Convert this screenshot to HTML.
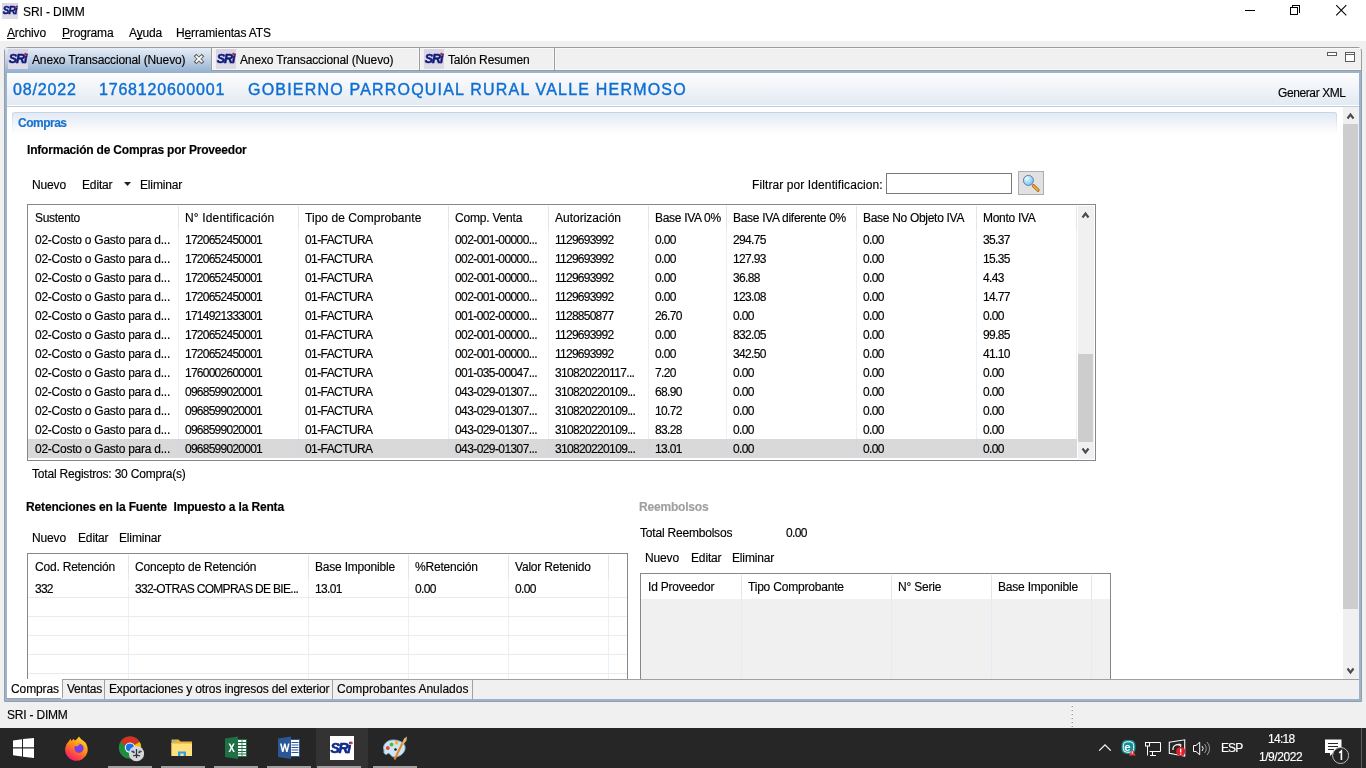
<!DOCTYPE html><html><head><meta charset="utf-8"><style>
*{margin:0;padding:0;box-sizing:border-box}
html,body{width:1366px;height:768px;overflow:hidden;background:#f0f0f0;font-family:"Liberation Sans",sans-serif;font-size:12px;color:#000}
.a{position:absolute}
.t{position:absolute;white-space:nowrap;line-height:0;height:0;will-change:transform;-webkit-text-stroke:0.15px currentColor}
.t>span,.t{ }
.sri{position:absolute;will-change:transform}
svg.a{will-change:transform}
.b{font-weight:bold}
u{text-decoration-skip-ink:none}
</style></head><body>
<div class="a" style="left:0;top:0;width:1366px;height:41px;background:#fff"></div>
<div class="sri" style="left:2px;top:3px;width:16px;height:16px"><svg width="16" height="16" viewBox="0 0 20 20"><rect width="20" height="20" fill="#d8d6e6"/><rect y="15" width="20" height="5" fill="#dcdbe6"/><text x="0.8" y="14.2" font-family="Liberation Sans" font-weight="bold" font-style="italic" font-size="12.5" fill="#0f1a78" stroke="#0f1a78" stroke-width="0.5" letter-spacing="-1.1">SRi</text><circle cx="17.5" cy="5" r="1.3" fill="#e8202a"/></svg></div>
<div class="t" style="left:23px;top:12px;letter-spacing:-0.1px">SRI - DIMM</div>
<div class="a" style="left:1245px;top:10px;width:10px;height:1px;background:#000"></div>
<div class="a" style="left:1290px;top:7px;width:8px;height:8px;border:1px solid #000"></div>
<div class="a" style="left:1292px;top:5px;width:8px;height:1px;background:#000"></div>
<div class="a" style="left:1299px;top:5px;width:1px;height:8px;background:#000"></div>
<div class="a" style="left:1292px;top:5px;width:1px;height:2px;background:#000"></div>
<svg class="a" style="left:1335px;top:4px" width="13" height="13"><path d="M1.2 1.2L11.3 11.3M11.3 1.2L1.2 11.3" stroke="#000" stroke-width="1.05"/></svg>
<div class="t" style="left:7px;top:33px;letter-spacing:-0.15px"><u>A</u>rchivo</div>
<div class="t" style="left:62px;top:33px;letter-spacing:-0.15px"><u>P</u>rograma</div>
<div class="t" style="left:129px;top:33px;letter-spacing:-0.15px">A<u>y</u>uda</div>
<div class="t" style="left:176px;top:33px;letter-spacing:-0.15px">H<u>e</u>rramientas ATS</div>
<div class="a" style="left:4px;top:47px;width:1358px;height:655px;border:1px solid #9c9c9c;border-radius:4px 4px 0 0;background:#f0f0f0"></div>
<div class="a" style="left:5px;top:48px;width:1356px;height:1px;background:#f8f8f8"></div>
<div class="a" style="left:5px;top:71px;width:1356px;height:630px;border:2px solid #98b4d4;border-top-width:2px"></div>
<div class="a" style="left:211px;top:70px;width:1150px;height:1px;background:#9c9c9c"></div>
<div class="a" style="left:212px;top:69px;width:1149px;height:1px;background:#f8f8f8"></div>
<div class="a" style="left:5px;top:48px;width:206px;height:25px;background:linear-gradient(#e6eef8,#c3d3e6 45%,#93afcf)"></div>
<div class="sri" style="left:8px;top:49px;width:20px;height:20px"><svg width="20" height="20" viewBox="0 0 20 20"><rect width="20" height="20" fill="#d8d6e6"/><rect y="15" width="20" height="5" fill="#dcdbe6"/><text x="0.8" y="14.2" font-family="Liberation Sans" font-weight="bold" font-style="italic" font-size="12.5" fill="#0f1a78" stroke="#0f1a78" stroke-width="0.5" letter-spacing="-1.1">SRi</text><circle cx="17.5" cy="5" r="1.3" fill="#e8202a"/></svg></div>
<div class="t" style="left:32px;top:60px;letter-spacing:-0.15px">Anexo Transaccional (Nuevo)</div>
<svg class="a" style="left:192px;top:52px" width="14" height="14"><path d="M3 3L11 11M11 3L3 11" stroke="#606060" stroke-width="3.8" stroke-linecap="butt"/><path d="M3.8 3.8L10.2 10.2M10.2 3.8L3.8 10.2" stroke="#fff" stroke-width="1.9" stroke-linecap="butt"/></svg>
<div class="a" style="left:211px;top:48px;width:1px;height:22px;background:#9c9c9c"></div>
<div class="a" style="left:212px;top:49px;width:1px;height:20px;background:#f8f8f8"></div>
<div class="a" style="left:419px;top:48px;width:1px;height:22px;background:#9c9c9c"></div>
<div class="a" style="left:420px;top:49px;width:1px;height:20px;background:#f8f8f8"></div>
<div class="a" style="left:418px;top:49px;width:1px;height:20px;background:#f8f8f8"></div>
<div class="a" style="left:554px;top:48px;width:1px;height:22px;background:#9c9c9c"></div>
<div class="a" style="left:555px;top:49px;width:1px;height:20px;background:#f8f8f8"></div>
<div class="a" style="left:553px;top:49px;width:1px;height:20px;background:#f8f8f8"></div>
<div class="sri" style="left:216px;top:49px;width:20px;height:20px"><svg width="20" height="20" viewBox="0 0 20 20"><rect width="20" height="20" fill="#d8d6e6"/><rect y="15" width="20" height="5" fill="#dcdbe6"/><text x="0.8" y="14.2" font-family="Liberation Sans" font-weight="bold" font-style="italic" font-size="12.5" fill="#0f1a78" stroke="#0f1a78" stroke-width="0.5" letter-spacing="-1.1">SRi</text><circle cx="17.5" cy="5" r="1.3" fill="#e8202a"/></svg></div>
<div class="t" style="left:240px;top:60px;letter-spacing:-0.15px">Anexo Transaccional (Nuevo)</div>
<div class="sri" style="left:424px;top:49px;width:20px;height:20px"><svg width="20" height="20" viewBox="0 0 20 20"><rect width="20" height="20" fill="#d8d6e6"/><rect y="15" width="20" height="5" fill="#dcdbe6"/><text x="0.8" y="14.2" font-family="Liberation Sans" font-weight="bold" font-style="italic" font-size="12.5" fill="#0f1a78" stroke="#0f1a78" stroke-width="0.5" letter-spacing="-1.1">SRi</text><circle cx="17.5" cy="5" r="1.3" fill="#e8202a"/></svg></div>
<div class="t" style="left:448px;top:60px;letter-spacing:-0.15px">Talón Resumen</div>
<div class="a" style="left:1327px;top:52px;width:10px;height:4px;border:1px solid #5c5c5c;background:#fff"></div>
<div class="a" style="left:1345px;top:52px;width:10px;height:10px;border:1px solid #5c5c5c;background:#fff"></div>
<div class="a" style="left:1346px;top:54px;width:8px;height:1px;background:#5c5c5c"></div>
<div class="a" style="left:7px;top:73px;width:1352px;height:33px;background:linear-gradient(#fdfdfe,#e3eaf3 96%,#ffffff 96%)"></div>
<div class="a" style="left:7px;top:106px;width:1352px;height:1px;background:#b9cde3"></div>
<div class="t" style="left:13px;top:90px;font-size:16px;color:#0e6fd2;letter-spacing:0.85px;-webkit-text-stroke:0.4px #0e6fd2">08/2022</div>
<div class="t" style="left:99px;top:90px;font-size:16px;color:#0e6fd2;letter-spacing:0.8px;-webkit-text-stroke:0.4px #0e6fd2">1768120600001</div>
<div class="t" style="left:248px;top:90px;font-size:16px;color:#0e6fd2;letter-spacing:1.2px;-webkit-text-stroke:0.4px #0e6fd2">GOBIERNO PARROQUIAL RURAL VALLE HERMOSO</div>
<div class="t" style="left:1278px;top:93px;letter-spacing:-0.4px">Generar XML</div>
<div class="a" style="left:7px;top:107px;width:1352px;height:572px;background:#fff"></div>
<div class="a" style="left:1343px;top:107px;width:16px;height:572px;background:#f0f0f0"></div>
<div class="a" style="left:1343px;top:124px;width:15px;height:485px;background:#cdcdcd"></div>
<svg class="a" style="left:1345.5px;top:111.5px" width="9" height="8"><path d="M1 6L4 2L7 6" transform="translate(0.5 0.5)" fill="none" stroke="#4a4a4a" stroke-width="2.1" stroke-linejoin="miter"/></svg>
<svg class="a" style="left:1345.5px;top:666.5px" width="9" height="8"><path d="M1 1L4 5L7 1" transform="translate(0.5 0.5)" fill="none" stroke="#4a4a4a" stroke-width="2.1" stroke-linejoin="miter"/></svg>
<div class="a" style="left:12px;top:112px;width:1325px;height:22px;border-radius:3px 3px 0 0;background:linear-gradient(#c3d5e9,rgba(195,213,233,0))"></div>
<div class="a" style="left:13px;top:113px;width:1323px;height:21px;border-radius:2px 2px 0 0;background:linear-gradient(#e3eaf4,#f6f8fb 70%,#ffffff)"></div>
<div class="t" style="left:18px;top:123px;font-weight:bold;color:#1872d0;letter-spacing:-0.5px">Compras</div>
<div class="t" style="left:27px;top:150px;font-weight:bold;letter-spacing:-0.2px">Información de Compras por Proveedor</div>
<div class="t" style="left:32px;top:185px;letter-spacing:-0.15px">Nuevo</div>
<div class="t" style="left:82px;top:185px;letter-spacing:-0.15px">Editar</div>
<svg class="a" style="left:124px;top:182px" width="8" height="5"><path d="M0 0h7L3.5 4z" fill="#222"/></svg>
<div class="t" style="left:140px;top:185px;letter-spacing:-0.15px">Eliminar</div>
<div class="t" style="left:752px;top:185px;letter-spacing:0.1px">Filtrar por Identificacion:</div>
<div class="a" style="left:886px;top:173px;width:126px;height:21px;border:1px solid #7a7a7a;background:#fff"></div>
<div class="a" style="left:1018px;top:171px;width:26px;height:24px;border:1px solid #adadad;background:#e1e1e1"></div>
<svg class="a" style="left:1021px;top:174px" width="20" height="20"><defs><radialGradient id="lens" cx="0.35" cy="0.3" r="0.8"><stop offset="0" stop-color="#f2fcff"/><stop offset="0.35" stop-color="#b5e6fb"/><stop offset="1" stop-color="#6fc4ef"/></radialGradient></defs><path d="M12.4 11.6L17 16.2" stroke="#9a5a10" stroke-width="3.2" stroke-linecap="round"/><path d="M12.4 11.6L16.8 16" stroke="#f2b13a" stroke-width="1.8" stroke-linecap="round"/><circle cx="7.4" cy="6.4" r="5" fill="url(#lens)" stroke="#5b6ea3" stroke-width="0.9"/></svg>
<div class="a" style="left:27px;top:204px;width:1069px;height:257px;border:1px solid #828790;background:#fff"></div>
<div class="a" style="left:28px;top:439px;width:1049px;height:19px;background:#d9d9d9"></div>
<div class="a" style="left:1078px;top:206px;width:16px;height:253px;background:#f0f0f0"></div>
<div class="a" style="left:1078px;top:354px;width:15px;height:88px;background:#cdcdcd"></div>
<svg class="a" style="left:1080.5px;top:210.5px" width="9" height="8"><path d="M1 6L4 2L7 6" transform="translate(0.5 0.5)" fill="none" stroke="#4a4a4a" stroke-width="2.1" stroke-linejoin="miter"/></svg>
<svg class="a" style="left:1080.5px;top:446.5px" width="9" height="8"><path d="M1 1L4 5L7 1" transform="translate(0.5 0.5)" fill="none" stroke="#4a4a4a" stroke-width="2.1" stroke-linejoin="miter"/></svg>
<div class="a" style="left:178px;top:206px;width:1px;height:24px;background:#e5e5e5"></div>
<div class="a" style="left:178px;top:230px;width:1px;height:209px;background:#e8f0fa"></div>
<div class="a" style="left:178px;top:439px;width:1px;height:19px;background:#cfd8e3"></div>
<div class="a" style="left:298px;top:206px;width:1px;height:24px;background:#e5e5e5"></div>
<div class="a" style="left:298px;top:230px;width:1px;height:209px;background:#e8f0fa"></div>
<div class="a" style="left:298px;top:439px;width:1px;height:19px;background:#cfd8e3"></div>
<div class="a" style="left:448px;top:206px;width:1px;height:24px;background:#e5e5e5"></div>
<div class="a" style="left:448px;top:230px;width:1px;height:209px;background:#e8f0fa"></div>
<div class="a" style="left:448px;top:439px;width:1px;height:19px;background:#cfd8e3"></div>
<div class="a" style="left:548px;top:206px;width:1px;height:24px;background:#e5e5e5"></div>
<div class="a" style="left:548px;top:230px;width:1px;height:209px;background:#e8f0fa"></div>
<div class="a" style="left:548px;top:439px;width:1px;height:19px;background:#cfd8e3"></div>
<div class="a" style="left:648px;top:206px;width:1px;height:24px;background:#e5e5e5"></div>
<div class="a" style="left:648px;top:230px;width:1px;height:209px;background:#e8f0fa"></div>
<div class="a" style="left:648px;top:439px;width:1px;height:19px;background:#cfd8e3"></div>
<div class="a" style="left:726px;top:206px;width:1px;height:24px;background:#e5e5e5"></div>
<div class="a" style="left:726px;top:230px;width:1px;height:209px;background:#e8f0fa"></div>
<div class="a" style="left:726px;top:439px;width:1px;height:19px;background:#cfd8e3"></div>
<div class="a" style="left:856px;top:206px;width:1px;height:24px;background:#e5e5e5"></div>
<div class="a" style="left:856px;top:230px;width:1px;height:209px;background:#e8f0fa"></div>
<div class="a" style="left:856px;top:439px;width:1px;height:19px;background:#cfd8e3"></div>
<div class="a" style="left:976px;top:206px;width:1px;height:24px;background:#e5e5e5"></div>
<div class="a" style="left:976px;top:230px;width:1px;height:209px;background:#e8f0fa"></div>
<div class="a" style="left:976px;top:439px;width:1px;height:19px;background:#cfd8e3"></div>
<div class="a" style="left:1076px;top:206px;width:1px;height:24px;background:#e5e5e5"></div>
<div class="a" style="left:1076px;top:230px;width:1px;height:209px;background:#e8f0fa"></div>
<div class="a" style="left:1076px;top:439px;width:1px;height:19px;background:#cfd8e3"></div>
<div class="t" style="left:35px;top:218px;letter-spacing:-0.3px">Sustento</div>
<div class="t" style="left:185px;top:218px;letter-spacing:0.15px">N° Identificación</div>
<div class="t" style="left:305px;top:218px;letter-spacing:0.04px">Tipo de Comprobante</div>
<div class="t" style="left:455px;top:218px;letter-spacing:-0.2px">Comp. Venta</div>
<div class="t" style="left:555px;top:218px;letter-spacing:0.0px">Autorización</div>
<div class="t" style="left:655px;top:218px;letter-spacing:-0.3px">Base IVA 0%</div>
<div class="t" style="left:733px;top:218px;letter-spacing:-0.3px">Base IVA diferente 0%</div>
<div class="t" style="left:863px;top:218px;letter-spacing:-0.3px">Base No Objeto IVA</div>
<div class="t" style="left:983px;top:218px;letter-spacing:-0.3px">Monto IVA</div>
<div class="t" style="left:35px;top:240px;letter-spacing:-0.248px">02-Costo o Gasto para d...</div>
<div class="t" style="left:185px;top:240px;letter-spacing:-0.75px">1720652450001</div>
<div class="t" style="left:305px;top:240px;letter-spacing:-0.585px">01-FACTURA</div>
<div class="t" style="left:455px;top:240px;letter-spacing:-0.591px">002-001-00000...</div>
<div class="t" style="left:555px;top:240px;letter-spacing:-0.75px">1129693992</div>
<div class="t" style="left:655px;top:240px;letter-spacing:-0.637px">0.00</div>
<div class="t" style="left:733px;top:240px;letter-spacing:-0.675px">294.75</div>
<div class="t" style="left:863px;top:240px;letter-spacing:-0.637px">0.00</div>
<div class="t" style="left:983px;top:240px;letter-spacing:-0.66px">35.37</div>
<div class="t" style="left:35px;top:259px;letter-spacing:-0.248px">02-Costo o Gasto para d...</div>
<div class="t" style="left:185px;top:259px;letter-spacing:-0.75px">1720652450001</div>
<div class="t" style="left:305px;top:259px;letter-spacing:-0.585px">01-FACTURA</div>
<div class="t" style="left:455px;top:259px;letter-spacing:-0.591px">002-001-00000...</div>
<div class="t" style="left:555px;top:259px;letter-spacing:-0.75px">1129693992</div>
<div class="t" style="left:655px;top:259px;letter-spacing:-0.637px">0.00</div>
<div class="t" style="left:733px;top:259px;letter-spacing:-0.675px">127.93</div>
<div class="t" style="left:863px;top:259px;letter-spacing:-0.637px">0.00</div>
<div class="t" style="left:983px;top:259px;letter-spacing:-0.66px">15.35</div>
<div class="t" style="left:35px;top:278px;letter-spacing:-0.248px">02-Costo o Gasto para d...</div>
<div class="t" style="left:185px;top:278px;letter-spacing:-0.75px">1720652450001</div>
<div class="t" style="left:305px;top:278px;letter-spacing:-0.585px">01-FACTURA</div>
<div class="t" style="left:455px;top:278px;letter-spacing:-0.591px">002-001-00000...</div>
<div class="t" style="left:555px;top:278px;letter-spacing:-0.75px">1129693992</div>
<div class="t" style="left:655px;top:278px;letter-spacing:-0.637px">0.00</div>
<div class="t" style="left:733px;top:278px;letter-spacing:-0.66px">36.88</div>
<div class="t" style="left:863px;top:278px;letter-spacing:-0.637px">0.00</div>
<div class="t" style="left:983px;top:278px;letter-spacing:-0.637px">4.43</div>
<div class="t" style="left:35px;top:297px;letter-spacing:-0.248px">02-Costo o Gasto para d...</div>
<div class="t" style="left:185px;top:297px;letter-spacing:-0.75px">1720652450001</div>
<div class="t" style="left:305px;top:297px;letter-spacing:-0.585px">01-FACTURA</div>
<div class="t" style="left:455px;top:297px;letter-spacing:-0.591px">002-001-00000...</div>
<div class="t" style="left:555px;top:297px;letter-spacing:-0.75px">1129693992</div>
<div class="t" style="left:655px;top:297px;letter-spacing:-0.637px">0.00</div>
<div class="t" style="left:733px;top:297px;letter-spacing:-0.675px">123.08</div>
<div class="t" style="left:863px;top:297px;letter-spacing:-0.637px">0.00</div>
<div class="t" style="left:983px;top:297px;letter-spacing:-0.66px">14.77</div>
<div class="t" style="left:35px;top:316px;letter-spacing:-0.248px">02-Costo o Gasto para d...</div>
<div class="t" style="left:185px;top:316px;letter-spacing:-0.75px">1714921333001</div>
<div class="t" style="left:305px;top:316px;letter-spacing:-0.585px">01-FACTURA</div>
<div class="t" style="left:455px;top:316px;letter-spacing:-0.591px">001-002-00000...</div>
<div class="t" style="left:555px;top:316px;letter-spacing:-0.75px">1128850877</div>
<div class="t" style="left:655px;top:316px;letter-spacing:-0.66px">26.70</div>
<div class="t" style="left:733px;top:316px;letter-spacing:-0.637px">0.00</div>
<div class="t" style="left:863px;top:316px;letter-spacing:-0.637px">0.00</div>
<div class="t" style="left:983px;top:316px;letter-spacing:-0.637px">0.00</div>
<div class="t" style="left:35px;top:335px;letter-spacing:-0.248px">02-Costo o Gasto para d...</div>
<div class="t" style="left:185px;top:335px;letter-spacing:-0.75px">1720652450001</div>
<div class="t" style="left:305px;top:335px;letter-spacing:-0.585px">01-FACTURA</div>
<div class="t" style="left:455px;top:335px;letter-spacing:-0.591px">002-001-00000...</div>
<div class="t" style="left:555px;top:335px;letter-spacing:-0.75px">1129693992</div>
<div class="t" style="left:655px;top:335px;letter-spacing:-0.637px">0.00</div>
<div class="t" style="left:733px;top:335px;letter-spacing:-0.675px">832.05</div>
<div class="t" style="left:863px;top:335px;letter-spacing:-0.637px">0.00</div>
<div class="t" style="left:983px;top:335px;letter-spacing:-0.66px">99.85</div>
<div class="t" style="left:35px;top:354px;letter-spacing:-0.248px">02-Costo o Gasto para d...</div>
<div class="t" style="left:185px;top:354px;letter-spacing:-0.75px">1720652450001</div>
<div class="t" style="left:305px;top:354px;letter-spacing:-0.585px">01-FACTURA</div>
<div class="t" style="left:455px;top:354px;letter-spacing:-0.591px">002-001-00000...</div>
<div class="t" style="left:555px;top:354px;letter-spacing:-0.75px">1129693992</div>
<div class="t" style="left:655px;top:354px;letter-spacing:-0.637px">0.00</div>
<div class="t" style="left:733px;top:354px;letter-spacing:-0.675px">342.50</div>
<div class="t" style="left:863px;top:354px;letter-spacing:-0.637px">0.00</div>
<div class="t" style="left:983px;top:354px;letter-spacing:-0.66px">41.10</div>
<div class="t" style="left:35px;top:373px;letter-spacing:-0.248px">02-Costo o Gasto para d...</div>
<div class="t" style="left:185px;top:373px;letter-spacing:-0.75px">1760002600001</div>
<div class="t" style="left:305px;top:373px;letter-spacing:-0.585px">01-FACTURA</div>
<div class="t" style="left:455px;top:373px;letter-spacing:-0.591px">001-035-00047...</div>
<div class="t" style="left:555px;top:373px;letter-spacing:-0.66px">310820220117...</div>
<div class="t" style="left:655px;top:373px;letter-spacing:-0.637px">7.20</div>
<div class="t" style="left:733px;top:373px;letter-spacing:-0.637px">0.00</div>
<div class="t" style="left:863px;top:373px;letter-spacing:-0.637px">0.00</div>
<div class="t" style="left:983px;top:373px;letter-spacing:-0.637px">0.00</div>
<div class="t" style="left:35px;top:392px;letter-spacing:-0.248px">02-Costo o Gasto para d...</div>
<div class="t" style="left:185px;top:392px;letter-spacing:-0.75px">0968599020001</div>
<div class="t" style="left:305px;top:392px;letter-spacing:-0.585px">01-FACTURA</div>
<div class="t" style="left:455px;top:392px;letter-spacing:-0.591px">043-029-01307...</div>
<div class="t" style="left:555px;top:392px;letter-spacing:-0.66px">310820220109...</div>
<div class="t" style="left:655px;top:392px;letter-spacing:-0.66px">68.90</div>
<div class="t" style="left:733px;top:392px;letter-spacing:-0.637px">0.00</div>
<div class="t" style="left:863px;top:392px;letter-spacing:-0.637px">0.00</div>
<div class="t" style="left:983px;top:392px;letter-spacing:-0.637px">0.00</div>
<div class="t" style="left:35px;top:411px;letter-spacing:-0.248px">02-Costo o Gasto para d...</div>
<div class="t" style="left:185px;top:411px;letter-spacing:-0.75px">0968599020001</div>
<div class="t" style="left:305px;top:411px;letter-spacing:-0.585px">01-FACTURA</div>
<div class="t" style="left:455px;top:411px;letter-spacing:-0.591px">043-029-01307...</div>
<div class="t" style="left:555px;top:411px;letter-spacing:-0.66px">310820220109...</div>
<div class="t" style="left:655px;top:411px;letter-spacing:-0.66px">10.72</div>
<div class="t" style="left:733px;top:411px;letter-spacing:-0.637px">0.00</div>
<div class="t" style="left:863px;top:411px;letter-spacing:-0.637px">0.00</div>
<div class="t" style="left:983px;top:411px;letter-spacing:-0.637px">0.00</div>
<div class="t" style="left:35px;top:430px;letter-spacing:-0.248px">02-Costo o Gasto para d...</div>
<div class="t" style="left:185px;top:430px;letter-spacing:-0.75px">0968599020001</div>
<div class="t" style="left:305px;top:430px;letter-spacing:-0.585px">01-FACTURA</div>
<div class="t" style="left:455px;top:430px;letter-spacing:-0.591px">043-029-01307...</div>
<div class="t" style="left:555px;top:430px;letter-spacing:-0.66px">310820220109...</div>
<div class="t" style="left:655px;top:430px;letter-spacing:-0.66px">83.28</div>
<div class="t" style="left:733px;top:430px;letter-spacing:-0.637px">0.00</div>
<div class="t" style="left:863px;top:430px;letter-spacing:-0.637px">0.00</div>
<div class="t" style="left:983px;top:430px;letter-spacing:-0.637px">0.00</div>
<div class="t" style="left:35px;top:449px;letter-spacing:-0.248px">02-Costo o Gasto para d...</div>
<div class="t" style="left:185px;top:449px;letter-spacing:-0.75px">0968599020001</div>
<div class="t" style="left:305px;top:449px;letter-spacing:-0.585px">01-FACTURA</div>
<div class="t" style="left:455px;top:449px;letter-spacing:-0.591px">043-029-01307...</div>
<div class="t" style="left:555px;top:449px;letter-spacing:-0.66px">310820220109...</div>
<div class="t" style="left:655px;top:449px;letter-spacing:-0.66px">13.01</div>
<div class="t" style="left:733px;top:449px;letter-spacing:-0.637px">0.00</div>
<div class="t" style="left:863px;top:449px;letter-spacing:-0.637px">0.00</div>
<div class="t" style="left:983px;top:449px;letter-spacing:-0.637px">0.00</div>
<div class="t" style="left:32px;top:474px;letter-spacing:-0.2px">Total Registros: 30 Compra(s)</div>
<div class="t" style="left:26px;top:507px;font-weight:bold;letter-spacing:-0.15px">Retenciones en la Fuente &nbsp;Impuesto a la Renta</div>
<div class="t" style="left:32px;top:538px;letter-spacing:-0.15px">Nuevo</div>
<div class="t" style="left:78px;top:538px;letter-spacing:-0.15px">Editar</div>
<div class="t" style="left:119px;top:538px;letter-spacing:-0.15px">Eliminar</div>
<div class="a" style="left:27px;top:553px;width:601px;height:130px;border:1px solid #828790;border-bottom:none;background:#fff"></div>
<div class="a" style="left:128px;top:555px;width:1px;height:24px;background:#e5e5e5"></div>
<div class="a" style="left:128px;top:579px;width:1px;height:100px;background:#e8f0fa"></div>
<div class="a" style="left:308px;top:555px;width:1px;height:24px;background:#e5e5e5"></div>
<div class="a" style="left:308px;top:579px;width:1px;height:100px;background:#e8f0fa"></div>
<div class="a" style="left:408px;top:555px;width:1px;height:24px;background:#e5e5e5"></div>
<div class="a" style="left:408px;top:579px;width:1px;height:100px;background:#e8f0fa"></div>
<div class="a" style="left:508px;top:555px;width:1px;height:24px;background:#e5e5e5"></div>
<div class="a" style="left:508px;top:579px;width:1px;height:100px;background:#e8f0fa"></div>
<div class="a" style="left:608px;top:555px;width:1px;height:24px;background:#e5e5e5"></div>
<div class="a" style="left:608px;top:579px;width:1px;height:100px;background:#e8f0fa"></div>
<div class="a" style="left:28px;top:597px;width:599px;height:1px;background:#ebebeb"></div>
<div class="a" style="left:28px;top:616px;width:599px;height:1px;background:#ebebeb"></div>
<div class="a" style="left:28px;top:635px;width:599px;height:1px;background:#ebebeb"></div>
<div class="a" style="left:28px;top:654px;width:599px;height:1px;background:#ebebeb"></div>
<div class="a" style="left:28px;top:673px;width:599px;height:1px;background:#ebebeb"></div>
<div class="t" style="left:35px;top:567px;letter-spacing:-0.2px">Cod. Retención</div>
<div class="t" style="left:135px;top:567px;letter-spacing:-0.2px">Concepto de Retención</div>
<div class="t" style="left:315px;top:567px;letter-spacing:-0.2px">Base Imponible</div>
<div class="t" style="left:415px;top:567px;letter-spacing:-0.2px">%Retención</div>
<div class="t" style="left:515px;top:567px;letter-spacing:-0.2px">Valor Retenido</div>
<div class="t" style="left:35px;top:589px;letter-spacing:-0.75px">332</div>
<div class="t" style="left:135px;top:589px;letter-spacing:-0.7px">332-OTRAS COMPRAS DE BIE...</div>
<div class="t" style="left:315px;top:589px;letter-spacing:-0.66px">13.01</div>
<div class="t" style="left:415px;top:589px;letter-spacing:-0.637px">0.00</div>
<div class="t" style="left:515px;top:589px;letter-spacing:-0.637px">0.00</div>
<div class="t" style="left:639px;top:507px;font-weight:bold;color:#a0a0a0;letter-spacing:-0.2px">Reembolsos</div>
<div class="t" style="left:640px;top:533px;letter-spacing:-0.2px">Total Reembolsos</div>
<div class="t" style="left:786px;top:533px;letter-spacing:-0.637px">0.00</div>
<div class="t" style="left:645px;top:558px;letter-spacing:-0.15px">Nuevo</div>
<div class="t" style="left:691px;top:558px;letter-spacing:-0.15px">Editar</div>
<div class="t" style="left:732px;top:558px;letter-spacing:-0.15px">Eliminar</div>
<div class="a" style="left:640px;top:573px;width:471px;height:110px;border:1px solid #828790;border-bottom:none;background:#f0f0f0"></div>
<div class="a" style="left:641px;top:574px;width:469px;height:25px;background:#fff"></div>
<div class="a" style="left:741px;top:575px;width:1px;height:24px;background:#e5e5e5"></div>
<div class="a" style="left:741px;top:599px;width:1px;height:80px;background:#e3ebf4"></div>
<div class="a" style="left:891px;top:575px;width:1px;height:24px;background:#e5e5e5"></div>
<div class="a" style="left:891px;top:599px;width:1px;height:80px;background:#e3ebf4"></div>
<div class="a" style="left:991px;top:575px;width:1px;height:24px;background:#e5e5e5"></div>
<div class="a" style="left:991px;top:599px;width:1px;height:80px;background:#e3ebf4"></div>
<div class="a" style="left:1091px;top:575px;width:1px;height:24px;background:#e5e5e5"></div>
<div class="a" style="left:1091px;top:599px;width:1px;height:80px;background:#e3ebf4"></div>
<div class="t" style="left:648px;top:587px;letter-spacing:-0.2px">Id Proveedor</div>
<div class="t" style="left:748px;top:587px;letter-spacing:-0.2px">Tipo Comprobante</div>
<div class="t" style="left:898px;top:587px;letter-spacing:-0.2px">N° Serie</div>
<div class="t" style="left:998px;top:587px;letter-spacing:-0.2px">Base Imponible</div>
<div class="a" style="left:7px;top:679px;width:1352px;height:20px;background:#f0f0f0"></div>
<div class="a" style="left:62px;top:679px;width:1297px;height:1px;background:#a0a0a0"></div>
<div class="a" style="left:7px;top:679px;width:55px;height:19px;background:#fff"></div>
<div class="a" style="left:7px;top:698px;width:54px;height:1px;background:#a0a0a0"></div>
<div class="a" style="left:62px;top:680px;width:1px;height:18px;background:#a0a0a0"></div>
<div class="a" style="left:104px;top:680px;width:1px;height:19px;background:#a0a0a0"></div>
<div class="a" style="left:332px;top:680px;width:1px;height:19px;background:#a0a0a0"></div>
<div class="a" style="left:472px;top:680px;width:1px;height:19px;background:#a0a0a0"></div>
<div class="t" style="left:11px;top:689px;letter-spacing:-0.1px">Compras</div>
<div class="t" style="left:67px;top:689px;letter-spacing:-0.3px">Ventas</div>
<div class="t" style="left:109px;top:689px;letter-spacing:-0.15px">Exportaciones y otros ingresos del exterior</div>
<div class="t" style="left:337px;top:689px;letter-spacing:0px">Comprobantes Anulados</div>
<div class="t" style="left:7px;top:715px;letter-spacing:-0.2px">SRI - DIMM</div>
<div class="a" style="left:1071px;top:705px;width:2px;height:2px;background:#fff"></div>
<div class="a" style="left:1072px;top:706px;width:1px;height:1px;background:#9a9a9a"></div>
<div class="a" style="left:1071px;top:706px;width:1px;height:1px;background:#c8c8c8"></div>
<div class="a" style="left:1071px;top:709px;width:2px;height:2px;background:#fff"></div>
<div class="a" style="left:1072px;top:710px;width:1px;height:1px;background:#9a9a9a"></div>
<div class="a" style="left:1071px;top:710px;width:1px;height:1px;background:#c8c8c8"></div>
<div class="a" style="left:1071px;top:713px;width:2px;height:2px;background:#fff"></div>
<div class="a" style="left:1072px;top:714px;width:1px;height:1px;background:#9a9a9a"></div>
<div class="a" style="left:1071px;top:714px;width:1px;height:1px;background:#c8c8c8"></div>
<div class="a" style="left:1071px;top:717px;width:2px;height:2px;background:#fff"></div>
<div class="a" style="left:1072px;top:718px;width:1px;height:1px;background:#9a9a9a"></div>
<div class="a" style="left:1071px;top:718px;width:1px;height:1px;background:#c8c8c8"></div>
<div class="a" style="left:1071px;top:721px;width:2px;height:2px;background:#fff"></div>
<div class="a" style="left:1072px;top:722px;width:1px;height:1px;background:#9a9a9a"></div>
<div class="a" style="left:1071px;top:722px;width:1px;height:1px;background:#c8c8c8"></div>
<div class="a" style="left:1071px;top:725px;width:2px;height:2px;background:#fff"></div>
<div class="a" style="left:1072px;top:726px;width:1px;height:1px;background:#9a9a9a"></div>
<div class="a" style="left:1071px;top:726px;width:1px;height:1px;background:#c8c8c8"></div>
<div class="a" style="left:0;top:728px;width:1366px;height:40px;background:#262626"></div>
<div class="a" style="left:316px;top:728px;width:52px;height:40px;background:#333333"></div>
<svg class="a" style="left:13px;top:738px" width="22" height="20"><path d="M0 2.5L9 1.3V9.3H0Z M10 1.1L21 0V9.3H10Z M0 10.5H9V18.5L0 17.3Z M10 10.5H21V20L10 18.7Z" fill="#fff"/></svg>
<svg class="a" style="left:64px;top:733px" width="30" height="30"><defs><linearGradient id="ffg" x1="0.8" y1="0" x2="0.2" y2="1"><stop offset="0" stop-color="#ffe226"/><stop offset="0.45" stop-color="#ff8a16"/><stop offset="0.8" stop-color="#ff3750"/><stop offset="1" stop-color="#e3128f"/></linearGradient></defs><path d="M15 3.5c1 2 3 3 4.5 4.5 1.5 1 2.5 2 3 3.5A11.3 11.3 0 1 1 5 8c0.5-1 1-1.8 1.8-2.2 0 1 .3 1.8.8 2.3 0.6-1 1.4-1.8 2.4-2.3 0 1 .5 1.5 1 1.8C13 6 14 5 15 3.5z" fill="url(#ffg)"/><circle cx="15" cy="15.3" r="4.6" fill="#7b3ee6"/><path d="M10.5 12.5c1.5-1.5 4-2 6-1-1.5 0-2.5.8-3 2" fill="#ff9d1f"/></svg>
<svg class="a" style="left:117px;top:734px" width="32" height="30"><circle cx="13" cy="13.6" r="11.2" fill="#1e8e3e"/><path d="M13 13.6L3.3 8A11.2 11.2 0 0 1 22.7 8Z" fill="#d93025"/><path d="M13 13.6L22.7 8A11.2 11.2 0 0 1 18.6 23.3Z" fill="#fbbc04"/><circle cx="13" cy="13.6" r="5.2" fill="#fff"/><circle cx="13" cy="13.6" r="4.1" fill="#1a73e8"/><circle cx="19.5" cy="19.7" r="7.6" fill="#d8d8dc"/><path d="M14.5 17l3 2M24.5 17l-3 2M16 22l3.5-1 3.5 1M19.5 15v9" stroke="#333" stroke-width="1.3"/><circle cx="16.5" cy="17.5" r="1" fill="#2a5a9a"/><circle cx="22.5" cy="17.5" r="1" fill="#2a5a9a"/></svg>
<svg class="a" style="left:170px;top:736px" width="24" height="24"><path d="M1.5 3.5h7l2 2h11.5v14H1.5z" fill="#e0b640"/><path d="M1.5 7h20.5v13H1.5z" fill="#ffdf7e"/><path d="M1.5 7h20.5v1H1.5z" fill="#f3c94d"/><path d="M8 20v-4.5h8V20h-2.3v-2.5h-3.4V20z" fill="#2e9ee6"/><rect x="3" y="4.3" width="3" height="1.2" fill="#7ab8e8"/></svg>
<svg class="a" style="left:224px;top:736px" width="24" height="24"><rect x="13.5" y="3.5" width="9" height="17" fill="#fff" stroke="#1e7145"/><path d="M14 6.5h8M14 9.5h8M14 12.5h8M14 15.5h8M14 18h8" stroke="#1e7145" stroke-width="1.2"/><path d="M18 4v16" stroke="#1e7145" stroke-width="0.8"/><path d="M1 2.5L14 0.5V23L1 21Z" fill="#1e7145"/><path d="M4.5 7.5L6.2 7.5L7.6 10.2L9 7.5L10.7 7.5L8.5 11.7L10.8 16L9.1 16L7.6 13.1L6.1 16L4.4 16L6.7 11.7Z" fill="#fff"/></svg>
<svg class="a" style="left:277px;top:736px" width="24" height="24"><rect x="13.5" y="3.5" width="9" height="17" fill="#fff" stroke="#2b5797"/><path d="M14.5 6.5h7M14.5 9h7M14.5 11.5h7M14.5 14h7M14.5 16.5h7" stroke="#2b5797" stroke-width="1.1"/><path d="M1 2.5L14 0.5V23L1 21Z" fill="#2b5797"/><path d="M3 7.5h1.6l1.2 5.6 1.3-5.6h1.4l1.3 5.6 1.2-5.6h1.6l-2 8.5h-1.5l-1.3-5.3-1.3 5.3h-1.5z" fill="#fff"/></svg>
<svg class="a" style="left:330px;top:736px" width="24" height="24"><rect width="24" height="24" fill="#fff"/><text x="0.5" y="17" font-family="Liberation Sans" font-weight="bold" font-style="italic" font-size="14" fill="#0f2a8c" stroke="#0f2a8c" stroke-width="0.6" letter-spacing="-1.3">SRi</text><circle cx="21.5" cy="7" r="1.3" fill="#e53935"/></svg>
<svg class="a" style="left:381px;top:735px" width="28" height="27"><path d="M3 15C1 10 6 4.5 13 5s12 4 11 9-6 8-11 8c-2 0-3-1.5-4-3-1-1-2-1-3 0s-2 0-3-1z" fill="#cfe5f4" stroke="#86b6da" stroke-width="1"/><circle cx="14.5" cy="14.5" r="1.3" fill="#1d1d1d"/><circle cx="6.8" cy="13" r="1.9" fill="#e2453c"/><circle cx="10.5" cy="9.5" r="1.9" fill="#4cb84a"/><circle cx="15.5" cy="7.7" r="1.9" fill="#f5b431"/><path d="M13.5 24.5L22 7" stroke="#e2862a" stroke-width="2"/><path d="M21 8.5L23 3.5L26 1.5L25.5 5.5L22.5 9.5z" fill="#d9b37a"/></svg>
<div class="a" style="left:108px;top:766px;width:44px;height:2px;background:#a0a0a0"></div>
<div class="a" style="left:161px;top:766px;width:44px;height:2px;background:#a0a0a0"></div>
<div class="a" style="left:214px;top:766px;width:44px;height:2px;background:#a0a0a0"></div>
<div class="a" style="left:267px;top:766px;width:44px;height:2px;background:#a0a0a0"></div>
<div class="a" style="left:317px;top:766px;width:44px;height:2px;background:#a0a0a0"></div>
<div class="a" style="left:373px;top:766px;width:44px;height:2px;background:#a0a0a0"></div>
<svg class="a" style="left:1098px;top:743px" width="14" height="9"><path d="M1.2 7.6L7 1.8L12.8 7.6" fill="none" stroke="#fff" stroke-width="1.2"/></svg>
<svg class="a" style="left:1121px;top:739px" width="16" height="17"><rect x="0.5" y="1" width="14" height="14" rx="5" fill="#128f96"/><rect x="2.3" y="2.8" width="10.4" height="10.4" rx="3.6" fill="none" stroke="#fff" stroke-width="1"/><text x="3.2" y="12.2" font-size="11.5" font-family="Liberation Sans" font-weight="bold" fill="#fff">e</text><path d="M7.8 16.5L11.3 10.3L14.8 16.5z" fill="#e23b3b"/><path d="M11.3 12.3v2.4" stroke="#fff" stroke-width="0.9"/></svg>
<svg class="a" style="left:1144px;top:741px" width="19" height="16"><rect x="1.5" y="1.5" width="4" height="3.5" fill="none" stroke="#fff" stroke-width="1"/><path d="M3.5 5v9.5M5.5 1.5h11v9H5.5" fill="none" stroke="#fff" stroke-width="1"/><path d="M8.5 11v3M6 14.5h6" stroke="#fff" stroke-width="1"/></svg>
<svg class="a" style="left:1168px;top:739px" width="19" height="19"><path d="M1.3 3.3L16.7 0.8V17.2L1.3 14.4Z" fill="none" stroke="#fff" stroke-width="1.1"/><path d="M5 11a4.5 4.5 0 0 1 7-4.5" fill="none" stroke="#fff" stroke-width="1.1"/><path d="M10.5 5l2.5 0.5-0.5 2.5" fill="none" stroke="#fff" stroke-width="1"/><circle cx="12.7" cy="12.6" r="4.6" fill="#e2202b"/><path d="M12.7 9.8v3.6" stroke="#fff" stroke-width="1.3"/><path d="M12.7 14.4v1.3" stroke="#fff" stroke-width="1.3"/></svg>
<svg class="a" style="left:1192px;top:741px" width="19" height="15"><path d="M1.5 4.5h2.5l3.7-3.3v12.6L4 10.5H1.5z" fill="none" stroke="#fff" stroke-width="1"/><path d="M10 5a3.5 3.5 0 0 1 0 5" fill="none" stroke="#fff" stroke-width="1"/><path d="M12.5 3a6.5 6.5 0 0 1 0 9M15 1a9.5 9.5 0 0 1 0 13" fill="none" stroke="#9a9a9a" stroke-width="1"/></svg>
<div class="t" style="left:1221px;top:748px;color:#fff;letter-spacing:-0.9px">ESP</div>
<div class="t" style="left:1268px;top:739px;color:#fff;letter-spacing:-0.7px">14:18</div>
<div class="t" style="left:1259px;top:757px;color:#fff;letter-spacing:-0.45px">1/9/2022</div>
<svg class="a" style="left:1324px;top:738px" width="28" height="28"><path d="M1 1.5h16.5v13.5H9l-3 3v-3H1z" fill="#fff"/><path d="M4 5.5h10M4 8.5h10M4 11.5h6" stroke="#262626" stroke-width="1"/><circle cx="16.6" cy="17.5" r="8" fill="#262626" stroke="#bdbdbd" stroke-width="1"/><path d="M15.2 14.8l2.2-1.8v9" fill="none" stroke="#fff" stroke-width="1.6"/></svg>
<div class="a" style="left:1361px;top:728px;width:1px;height:40px;background:#5a5a5a"></div>
</body></html>
